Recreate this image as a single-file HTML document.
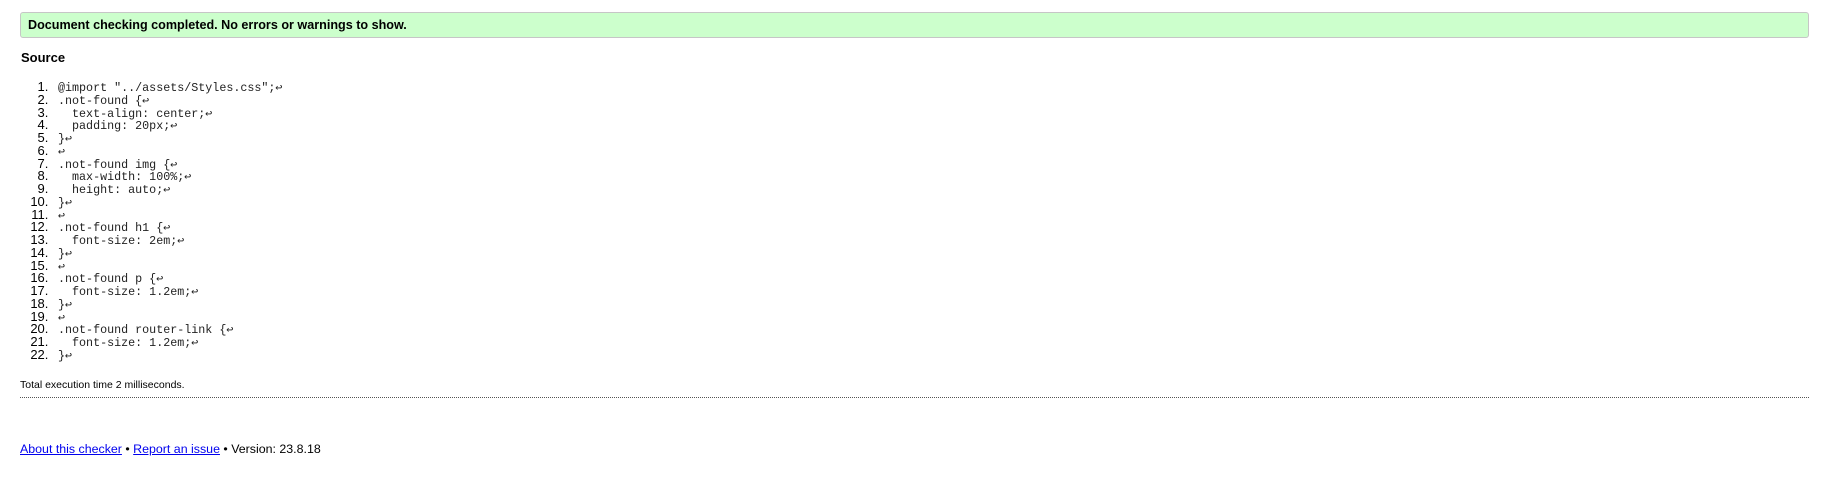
<!DOCTYPE html>
<html><head><style>
body{margin:0;background:#fff;font-family:"Liberation Sans",Arial,sans-serif;color:#000;width:1828px;height:498px;overflow:hidden}
.ok{position:absolute;left:20px;top:12px;width:1789px;height:26px;background:#ccffcc;border:1px solid #c6c6c6;border-radius:3px;font-size:12.6px;font-weight:bold;line-height:24px;box-sizing:border-box;padding-left:7px}
h2{position:absolute;left:21px;top:50px;margin:0;font-size:13px;font-weight:bold}
ol{position:absolute;left:0;top:81px;margin:0;padding:0 0 0 52px;font-size:13px;line-height:12.75px}
ol li{padding-left:6px;height:12.75px}
ol li span{font-family:"Liberation Mono","DejaVu Sans Mono",monospace;font-size:11.7px;color:#222;line-height:12.75px}
.t{position:absolute;left:20px;top:379px;font-size:10.5px}
.hr{position:absolute;left:20px;top:397px;width:1789px;border-top:1px dotted #555}
.f{position:absolute;left:20px;top:442px;font-size:12.4px}
.f a{color:#00e;text-decoration:underline}
</style></head><body>
<div class="ok">Document checking completed. No errors or warnings to show.</div>
<h2>Source</h2>
<ol>
<li><span>@import "../assets/Styles.css";↩</span></li>
<li><span>.not-found {↩</span></li>
<li><span>&nbsp;&nbsp;text-align: center;↩</span></li>
<li><span>&nbsp;&nbsp;padding: 20px;↩</span></li>
<li><span>}↩</span></li>
<li><span>↩</span></li>
<li><span>.not-found img {↩</span></li>
<li><span>&nbsp;&nbsp;max-width: 100%;↩</span></li>
<li><span>&nbsp;&nbsp;height: auto;↩</span></li>
<li><span>}↩</span></li>
<li><span>↩</span></li>
<li><span>.not-found h1 {↩</span></li>
<li><span>&nbsp;&nbsp;font-size: 2em;↩</span></li>
<li><span>}↩</span></li>
<li><span>↩</span></li>
<li><span>.not-found p {↩</span></li>
<li><span>&nbsp;&nbsp;font-size: 1.2em;↩</span></li>
<li><span>}↩</span></li>
<li><span>↩</span></li>
<li><span>.not-found router-link {↩</span></li>
<li><span>&nbsp;&nbsp;font-size: 1.2em;↩</span></li>
<li><span>}↩</span></li>
</ol>
<div class="t">Total execution time 2 milliseconds.</div>
<div class="hr"></div>
<div class="f"><a>About this checker</a> • <a>Report an issue</a> • Version: 23.8.18</div>
</body></html>
